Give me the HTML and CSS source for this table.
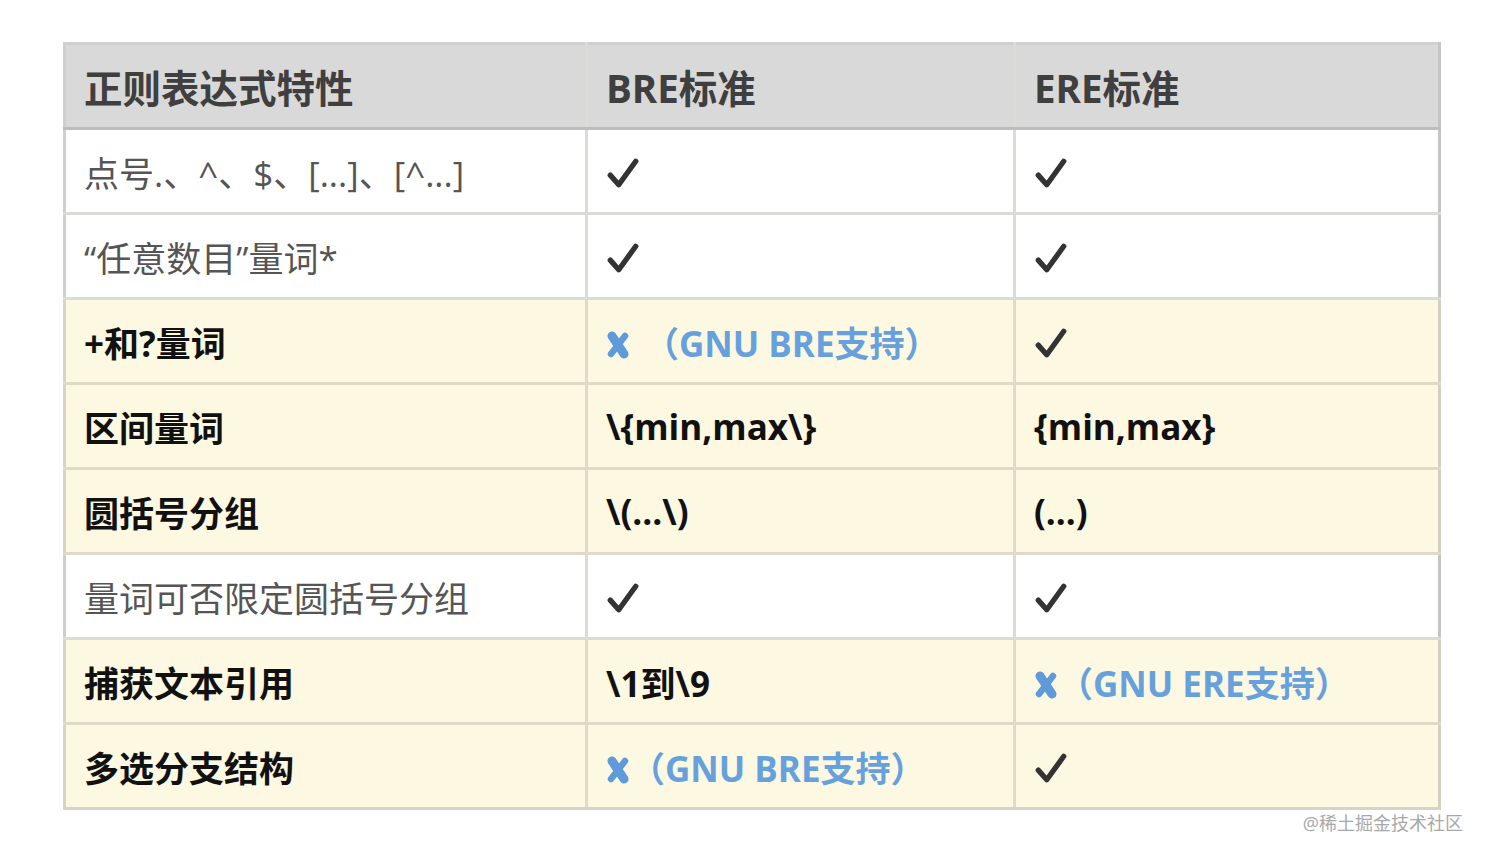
FILE: index.html
```html
<!DOCTYPE html>
<html lang="zh-CN">
<head>
<meta charset="utf-8">
<link rel="stylesheet" href="styles.css">
</head>
<body>
<div class="page">
<table class="cmp">
  <thead>
    <tr><th>正则表达式特性</th><th>BRE标准</th><th>ERE标准</th></tr>
  </thead>
  <tbody>
    <tr class="plain">
      <td>点号.、^、$、[...]、[^...]</td>
      <td><svg class="ok" viewBox="0 0 32 32"><path d="M4 18 L12 27 L28 5"/></svg></td>
      <td><svg class="ok" viewBox="0 0 32 32"><path d="M4 18 L12 27 L28 5"/></svg></td>
    </tr>
    <tr class="plain">
      <td>“任意数目”量词*</td>
      <td><svg class="ok" viewBox="0 0 32 32"><path d="M4 18 L12 27 L28 5"/></svg></td>
      <td><svg class="ok" viewBox="0 0 32 32"><path d="M4 18 L12 27 L28 5"/></svg></td>
    </tr>
    <tr class="hl">
      <td>+和?量词</td>
      <td class="blue"><svg class="no" viewBox="0 0 24 28"><path class="a" d="M6 5 L18 23"/><path d="M19 5 L5 23"/></svg><span class="gap"></span>（GNU BRE支持）</td>
      <td><svg class="ok" viewBox="0 0 32 32"><path d="M4 18 L12 27 L28 5"/></svg></td>
    </tr>
    <tr class="hl">
      <td>区间量词</td>
      <td>\{min,max\}</td>
      <td>{min,max}</td>
    </tr>
    <tr class="hl">
      <td>圆括号分组</td>
      <td>\(...\)</td>
      <td>(...)</td>
    </tr>
    <tr class="plain">
      <td>量词可否限定圆括号分组</td>
      <td><svg class="ok" viewBox="0 0 32 32"><path d="M4 18 L12 27 L28 5"/></svg></td>
      <td><svg class="ok" viewBox="0 0 32 32"><path d="M4 18 L12 27 L28 5"/></svg></td>
    </tr>
    <tr class="hl">
      <td>捕获文本引用</td>
      <td>\1到\9</td>
      <td class="blue"><svg class="no" viewBox="0 0 24 28"><path class="a" d="M6 5 L18 23"/><path d="M19 5 L5 23"/></svg>（GNU ERE支持）</td>
    </tr>
    <tr class="hl">
      <td>多选分支结构</td>
      <td class="blue"><svg class="no" viewBox="0 0 24 28"><path class="a" d="M6 5 L18 23"/><path d="M19 5 L5 23"/></svg>（GNU BRE支持）</td>
      <td><svg class="ok" viewBox="0 0 32 32"><path d="M4 18 L12 27 L28 5"/></svg></td>
    </tr>
  </tbody>
</table>
<div class="mark">@稀土掘金技术社区</div>
</div>
</body>
</html>
```

FILE: styles.css
```css
html, body {
  margin: 0;
  padding: 0;
  background: #ffffff;
}
body {
  font-family: "Open Sans", "Noto Sans CJK SC", sans-serif;
}
.page {
  padding: 42px 0 0 63px;
  width: 1400px;
}
.cmp {
  border-collapse: collapse;
  table-layout: fixed;
  width: 1378px;
}
.cmp th, .cmp td {
  box-sizing: border-box;
  border: 3px solid #dcdcd6;
  text-align: left;
  vertical-align: middle;
  padding: 0 0 0 18px;
  height: 85px;
  white-space: nowrap;
}
.cmp th:nth-child(1), .cmp td:nth-child(1) { width: 522px; }
.cmp th:nth-child(2), .cmp td:nth-child(2) { width: 428px; }
.cmp th {
  background: #d9d9d9;
  color: #3f3f3f;
  font-size: 38.5px;
  font-weight: 700;
  border-bottom-color: #bdbdbd;
  border-top-color: #d0d0d0;
}
.cmp th:first-child, .cmp td:first-child { border-left-color: #cfcfcf; }
.cmp th:last-child, .cmp td:last-child { border-right-color: #c4c4c4; }
.cmp td {
  font-size: 35px;
}
.plain td {
  background: #ffffff;
  color: #555555;
  font-weight: 400;
}
.hl td {
  background: #fdf8e1;
  color: #111111;
  font-weight: 700;
  border-color: #dedbc8;
}
.hl td:first-child { border-left-color: #d6d4c4; }
.hl td:last-child { border-right-color: #d2d0c0; }
.cmp tr:last-child td { border-bottom-color: #d6d4c4; }
.cmp td.blue {
  color: #66a1dd;
}
.ok {
  width: 34px;
  height: 34px;
  vertical-align: middle;
  fill: none;
  stroke: #333333;
  stroke-width: 5;
  stroke-linecap: round;
  stroke-linejoin: round;
  margin-top: -4px;
}
.no {
  width: 24px;
  height: 28px;
  vertical-align: middle;
  fill: none;
  stroke: #5f9bdb;
  stroke-width: 6.5;
  stroke-linecap: round;
  margin-top: -4px;
}
.no .a {
  stroke-width: 9;
}
.gap {
  display: inline-block;
  width: 14px;
}
.mark {
  text-align: right;
  width: 1400px;
  margin-top: -1px;
  font-size: 18px;
  color: #a8a8a8;
  font-weight: 400;
}
```
